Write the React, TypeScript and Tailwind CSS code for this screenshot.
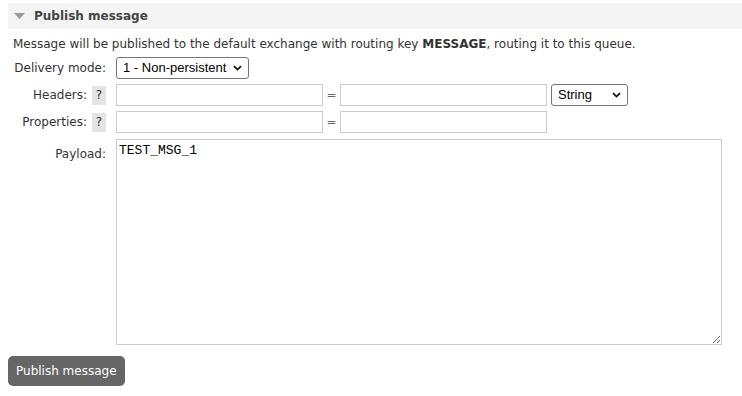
import React from "react";

const font = { fontFamily: '"DejaVu Sans", Verdana, sans-serif' };

const Chevron = () => (
  <svg width="9" height="6" viewBox="0 0 9 6" className="absolute right-[6px] top-1/2 -translate-y-1/2 pointer-events-none">
    <path d="M1 1.2 L4.5 4.6 L8 1.2" fill="none" stroke="#111" strokeWidth="1.8" />
  </svg>
);

const FakeSelect: React.FC<{ label: string; className: string }> = ({ label, className }) => (
  <div
    className={`relative h-[22px] border border-[#767676] rounded-[3px] bg-white text-[13px] text-black leading-[20px] pl-[6px] font-['Liberation_Sans',Arial,sans-serif] ${className}`}
  >
    {label}
    <Chevron />
  </div>
);

const Help = () => (
  <span className="inline-block w-[14px] h-[19px] bg-[#e4e4e4] text-[12px] leading-[19px] text-center text-[#333] ml-[5px]">?</span>
);

const Label: React.FC<{ children: React.ReactNode }> = ({ children }) => (
  <div className="w-[103px] flex justify-end items-center pr-[5px] text-[12px] text-[#333] whitespace-nowrap">{children}</div>
);

const TextBox = () => <div className="w-[207px] h-[22px] border border-[#ccc] bg-white" />;

export default function App() {
  return (
    <div className="w-[742px] h-[396px] bg-white pl-[8px] pt-[3px] text-[#333]" style={font}>
      <div className="h-[26px] bg-[#f4f4f4] flex items-center pl-[6px]">
        <svg width="11" height="6" viewBox="0 0 11 6" className="mr-[9px]">
          <path d="M0 0 H11 L5.5 6 Z" fill="#9a9a9a" />
        </svg>
        <span className="text-[12px] font-bold text-[#444]">Publish message</span>
      </div>

      <p className="text-[12px] pl-[5px] mt-[8px] leading-[15px]">
        Message will be published to the default exchange with routing key <b>MESSAGE</b>, routing it to this queue.
      </p>

      <div className="flex items-center mt-[5px]">
        <Label>Delivery mode:</Label>
        <FakeSelect label="1 - Non-persistent" className="w-[133px] ml-[5px]" />
      </div>

      <div className="flex items-center mt-[5px]">
        <Label>
          Headers: <Help />
        </Label>
        <div className="ml-[5px] flex items-center">
          <TextBox />
          <span className="w-[17px] text-center text-[12px] text-[#666]">=</span>
          <TextBox />
          <FakeSelect label="String" className="w-[77px] ml-[4px]" />
        </div>
      </div>

      <div className="flex items-center mt-[5px]">
        <Label>
          Properties: <Help />
        </Label>
        <div className="ml-[5px] flex items-center">
          <TextBox />
          <span className="w-[17px] text-center text-[12px] text-[#666]">=</span>
          <TextBox />
        </div>
      </div>

      <div className="flex items-start mt-[6px]">
        <div className="w-[103px] text-right pr-[5px] text-[12px] pt-[6px]">Payload:</div>
        <textarea
          defaultValue="TEST_MSG_1"
          className="ml-[5px] w-[606px] h-[206px] border border-[#ccc] bg-white text-[13px] text-black px-[2px] pt-[3px] leading-[15px] outline-none font-['Liberation_Mono','Courier_New',monospace]"
        />
      </div>

      <button className="mt-[11px] h-[30px] px-[8px] rounded-[5px] bg-[#666] text-white text-[12px]" style={font}>
        Publish message
      </button>
    </div>
  );
}
